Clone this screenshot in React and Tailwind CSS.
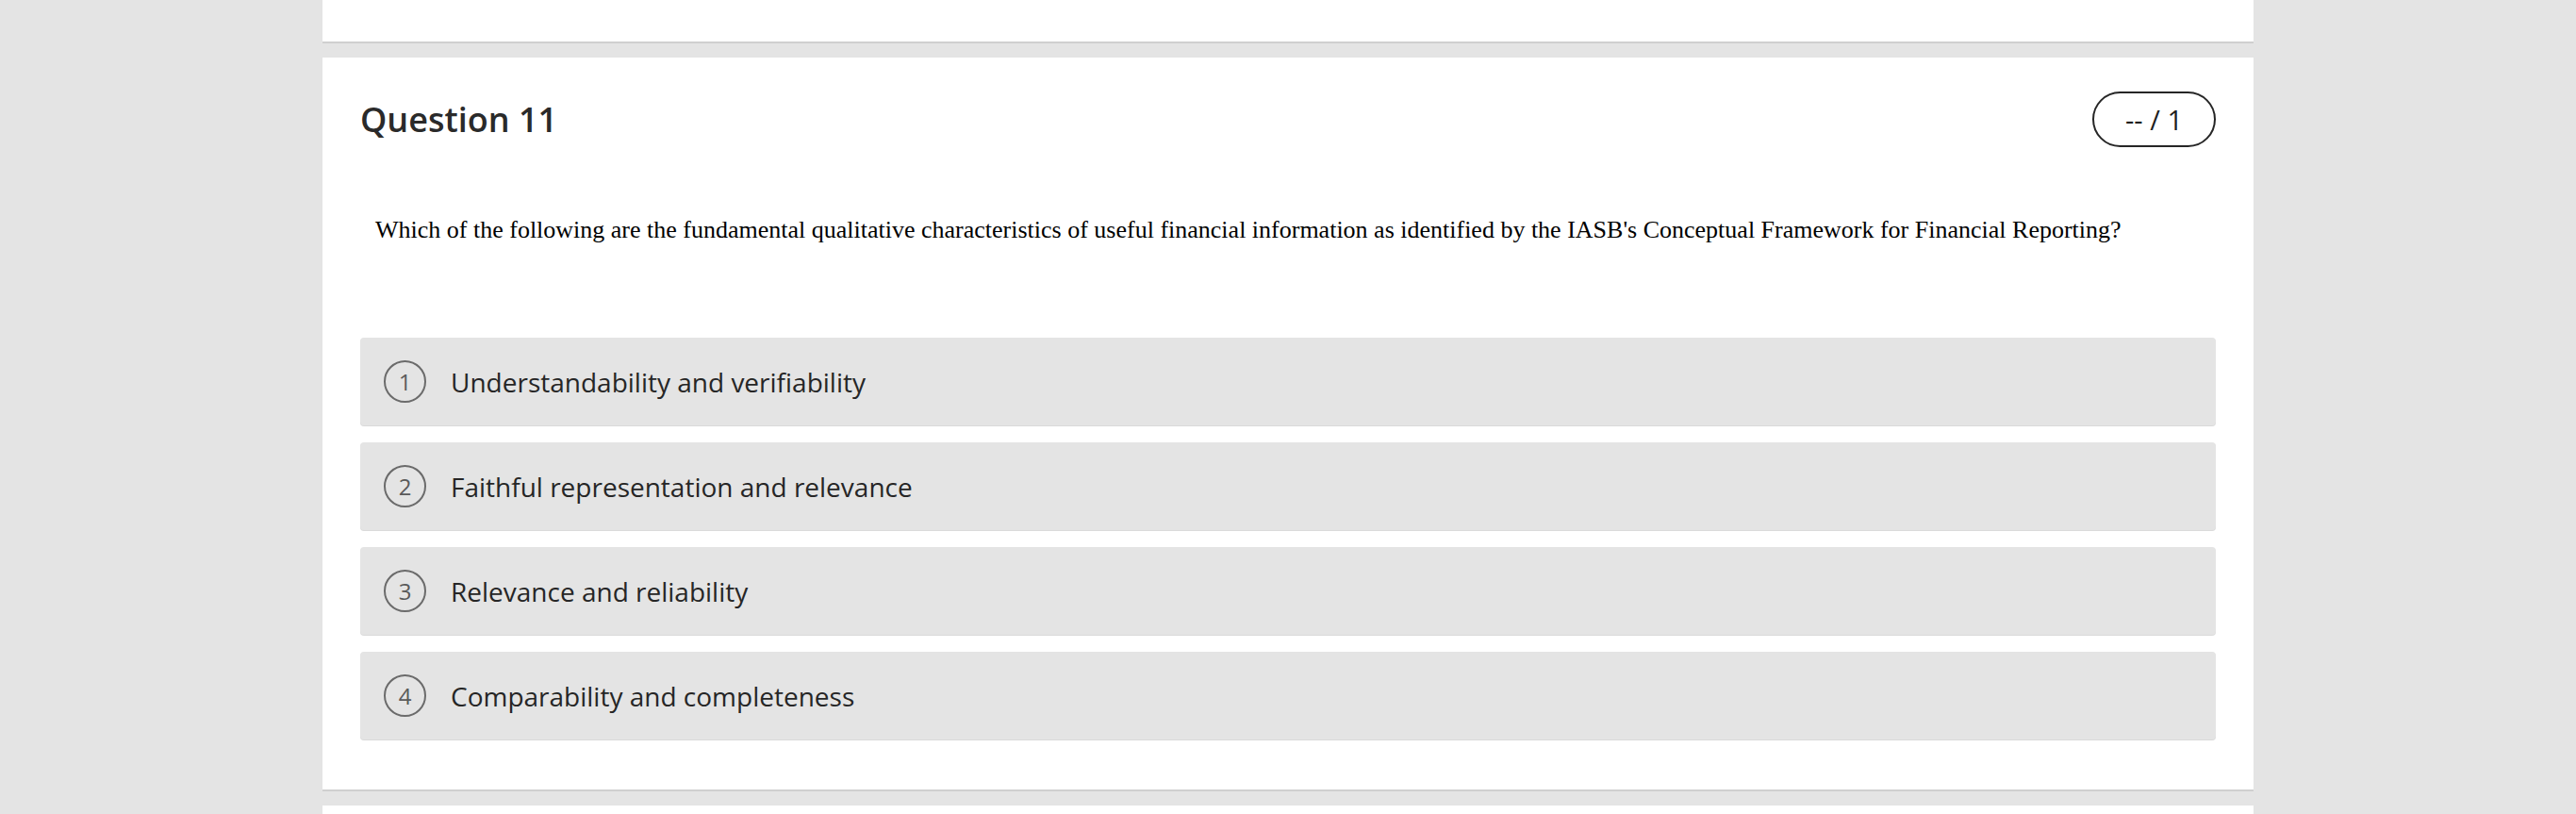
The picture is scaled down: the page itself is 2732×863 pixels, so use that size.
import React from "react";

const options = [
  "Understandability and verifiability",
  "Faithful representation and relevance",
  "Relevance and reliability",
  "Comparability and completeness",
];

export default function App() {
  return (
    <div className="min-h-screen w-full bg-[#e4e4e4] overflow-hidden" style={{ height: 863 }}>
      <div className="mx-auto w-[2048px] flex flex-col gap-[15px]">
        <div className="h-[46px] bg-white border-b-2 border-[#cfcfcf]" />
        <div className="bg-white border-b-2 border-[#cfcfcf] pt-[36px] px-[40px] pb-[53px] flex flex-col">
          <div className="flex items-center justify-between h-[59px]">
            <h2
              className="text-[36px] leading-none font-semibold text-[#2a2a2a]"
              style={{ fontFamily: '"Open Sans", "Noto Sans", sans-serif' }}
            >
              Question 11
            </h2>
            <div
              className="w-[131px] h-[59px] rounded-full border-2 border-[#262626] flex items-center justify-center text-[29px] text-[#1f1f1f]"
              style={{ fontFamily: '"Open Sans", "Noto Sans", sans-serif' }}
            >
              -- / 1
            </div>
          </div>
          <p
            className="mt-[73px] pl-[16px] text-[26px] leading-[30px] text-black"
            style={{ fontFamily: '"Liberation Serif", "Times New Roman", serif' }}
          >
            Which of the following are the fundamental qualitative characteristics of useful financial information as identified by the IASB's Conceptual Framework for Financial Reporting?
          </p>
          <div className="mt-[99px] flex flex-col gap-[18px]">
            {options.map((opt, i) => (
              <div
                key={i}
                className="h-[93px] rounded-[4px] bg-[#e4e4e4] shadow-[0_1px_0_#dadada] flex items-center pl-[25px]"
                style={{ fontFamily: '"Open Sans", "Noto Sans", sans-serif' }}
              >
                <div className="w-[45px] h-[45px] rounded-full border-2 border-[#6b6b6b] flex items-center justify-center text-[24px] text-[#5a5a5a] shrink-0">
                  {i + 1}
                </div>
                <span className="ml-[26px] text-[28px] text-[#262626]">{opt}</span>
              </div>
            ))}
          </div>
        </div>
        <div className="h-[40px] bg-white" />
      </div>
    </div>
  );
}
